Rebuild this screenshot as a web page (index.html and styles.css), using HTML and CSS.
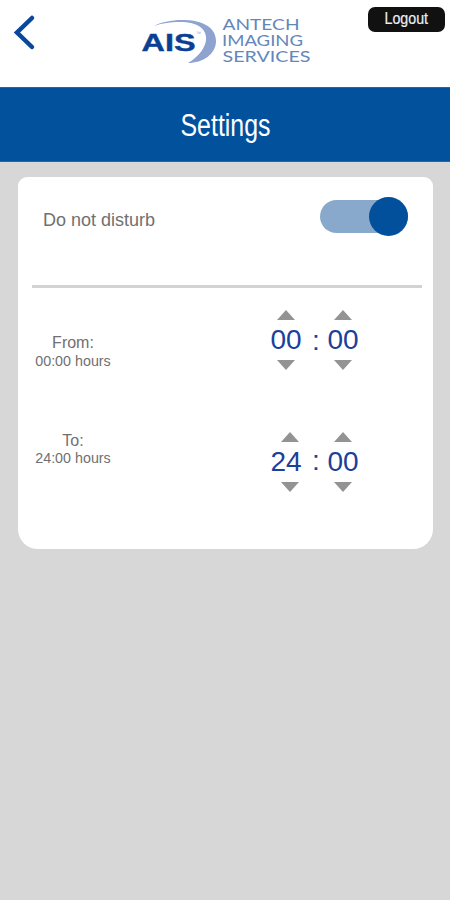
FILE: index.html
```html
<!DOCTYPE html>
<html lang="en">
<head>
<meta charset="utf-8">
<title>Settings</title>
<link rel="stylesheet" href="styles.css">
</head>
<body>
<header class="topbar">
  <svg class="back" width="24" height="38" viewBox="0 0 24 38"><path d="M19 4 L4 18.5 L19 33"/></svg>
  <svg class="logo" width="174" height="50" viewBox="0 0 174 50">
    <path class="swoosh" d="M13 10 C28 1 75 -1 75 25 C75 38 62 47 47 47 C70 34 75 6 39 6 C29 6 22 7 13 10Z"/>
    <text class="ais" x="0.500" y="35" textLength="54" lengthAdjust="spacingAndGlyphs">AIS</text>
    <text class="tm" x="55" y="19">™</text>
    <g class="words">
      <text x="81.500" y="14" textLength="77" lengthAdjust="spacingAndGlyphs">ANTECH</text>
      <text x="81" y="30" textLength="81" lengthAdjust="spacingAndGlyphs">IMAGING</text>
      <text x="81.500" y="46" textLength="88" lengthAdjust="spacingAndGlyphs">SERVICES</text>
    </g>
  </svg>
  <svg class="logout" width="77" height="25" viewBox="0 0 77 25"><text x="16.500" y="17" textLength="43.500" lengthAdjust="spacingAndGlyphs">Logout</text></svg>
</header>
<div class="title">
  <svg width="200" height="60" viewBox="0 0 200 60"><text x="55.500" y="41" textLength="90" lengthAdjust="spacingAndGlyphs">Settings</text></svg>
</div>
<main class="card">
  <section class="dnd">
    <span class="dnd-label">Do not disturb</span>
    <span class="toggle"><span class="knob"></span></span>
  </section>
  <section class="row from">
    <div class="label"><div class="name">From:</div><div class="hours">00:00 hours</div></div>
    <div class="time">
      <div class="unit"><i class="up"></i><span>00</span><i class="down"></i></div>
      <span class="colon">:</span>
      <div class="unit"><i class="up"></i><span>00</span><i class="down"></i></div>
    </div>
  </section>
  <section class="row to">
    <div class="label"><div class="name">To:</div><div class="hours">24:00 hours</div></div>
    <div class="time">
      <div class="unit shifted"><i class="up"></i><span>24</span><i class="down"></i></div>
      <span class="colon">:</span>
      <div class="unit"><i class="up"></i><span>00</span><i class="down"></i></div>
    </div>
  </section>
</main>
</body>
</html>
```
FILE: styles.css
```css
* { box-sizing: border-box; }
body {
  margin: 0;
  min-height: 900px;
  background: #d7d7d7;
  font-family: "Liberation Sans", Arial, sans-serif;
  color: #707070;
}
svg { display: block; }
.topbar {
  display: flex;
  align-items: flex-start;
  height: 87px;
  padding-right: 5px;
  background: #fff;
}
.back { margin: 14px 0 0 13px; fill: none; stroke: #08479b; stroke-width: 4.5; stroke-linecap: round; }
.logo { margin: 16px 0 0 104px; }
.swoosh { fill: #8ea3d0; }
.ais { font-size: 23.500px; font-weight: bold; fill: #0b3f94; stroke: #0b3f94; stroke-width: .4; }
.tm { font-size: 5px; fill: #8ea3d0; }
.words { font-family: Lato, "Liberation Sans", sans-serif; font-size: 14.500px; fill: #6387ba; }
.logout {
  margin: 7px 0 0 auto;
  background: #111;
  border-radius: 7px;
  font-size: 17px;
  fill: #eee;
  stroke: #eee;
  stroke-width: .2;
}
.title {
  display: flex;
  justify-content: center;
  height: 75px;
  padding-top: 7px;
  background: #02519c;
  border-top: 1px solid #2a63ad;
  border-bottom: 1px solid #2a63ad;
  font-size: 31px;
  fill: #fff;
}
.title svg { overflow: visible; }
.card {
  height: 372px;
  margin: 15px 17px 0 18px;
  padding: 0 11px 0 14px;
  background: #fff;
  border-radius: 9px 9px 20px 20px;
}
.dnd {
  display: flex;
  justify-content: space-between;
  height: 111px;
  padding: 20px 14px 0 11px;
  border-bottom: 3px solid #d3d3d3;
}
.dnd-label { margin-top: 13px; font-size: 18px; line-height: 20px; }
.toggle {
  display: flex;
  align-items: center;
  justify-content: flex-end;
  width: 88px;
  height: 33px;
  margin-top: 3px;
  border-radius: 17px;
  background: #88a9cb;
}
.knob { width: 39px; height: 39px; flex: none; border-radius: 50%; background: #02509b; }
.row { display: flex; }
.from { height: 121px; padding-top: 22px; }
.to { padding-top: 23px; }
.label { width: 80px; margin: 23px 0 0 1px; text-align: center; }
.name { font-size: 16px; line-height: 20px; }
.hours { margin-top: -1px; font-size: 14.300px; line-height: 18px; }
.to .label { margin-top: -1px; }
.to .hours { margin-top: -2px; }
.time { display: flex; margin-left: 156px; color: #1b409a; font-size: 28px; line-height: 32px; }
.unit { display: flex; flex-direction: column; align-items: center; width: 34px; }
.up, .down { border-left: 9px solid transparent; border-right: 9px solid transparent; }
.up { border-bottom: 10px solid #939393; }
.down { border-top: 10px solid #939393; }
.unit span { margin: 4px 0; }
.colon { width: 23px; margin-top: 15px; text-align: center; padding-left: 3px; }
.to .colon { margin-top: 13px; }
.shifted .up, .shifted .down { margin-left: 7px; }
```
